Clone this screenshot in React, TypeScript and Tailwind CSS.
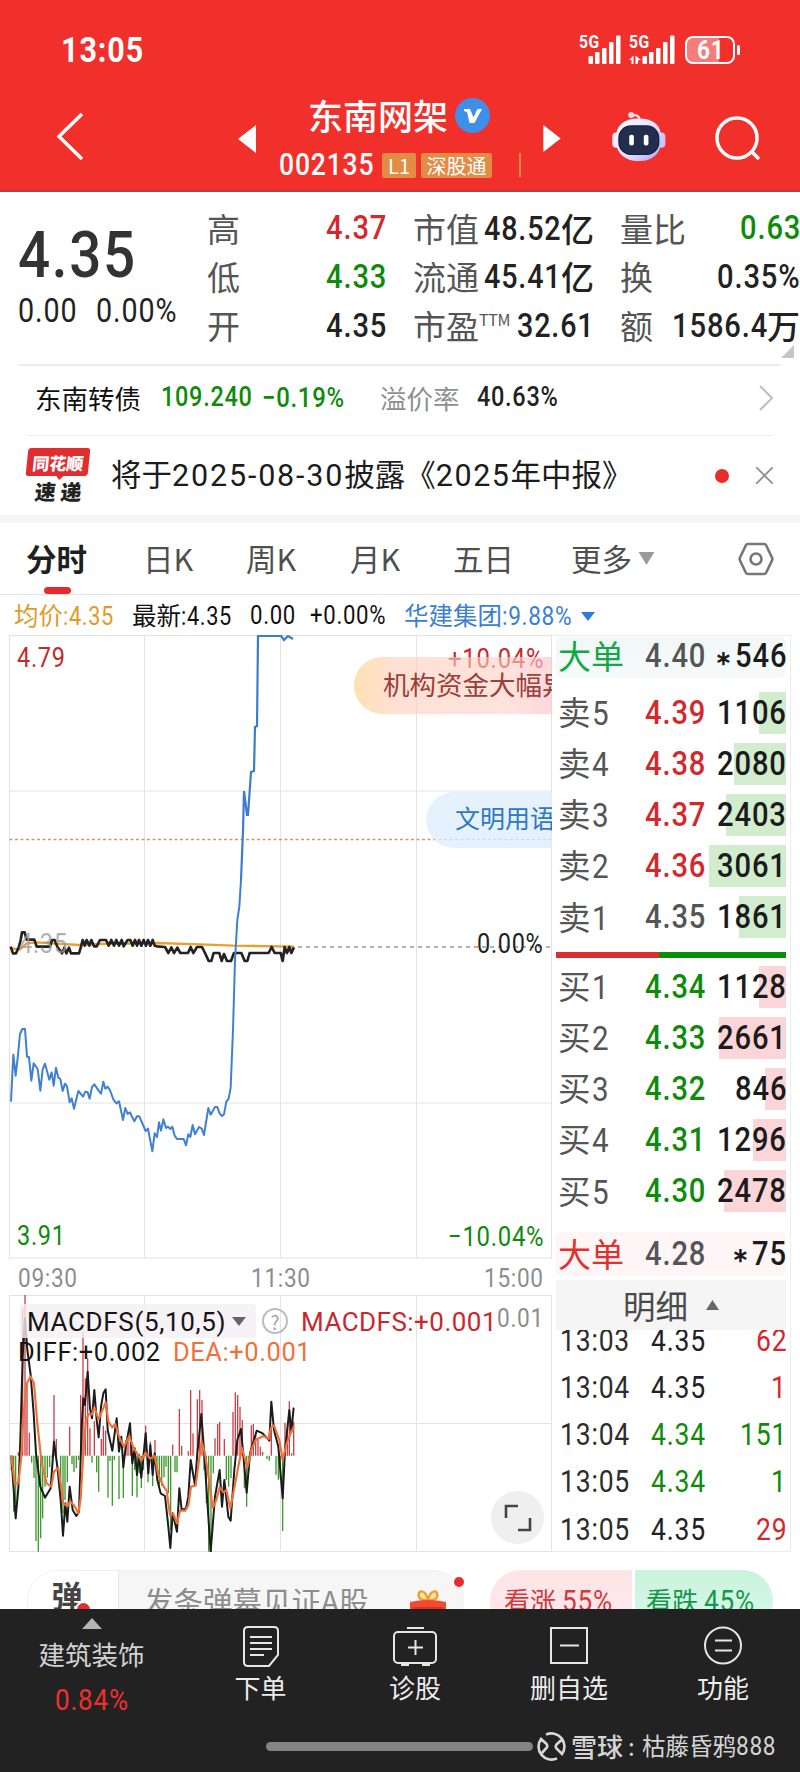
import React from "react";

type Tone = "red" | "green" | "ink" | "gray";

const TONES: Record<Tone, string> = {
  red: "text-[#d2292d]",
  green: "text-[#0f8a0b]",
  ink: "text-[#222222]",
  gray: "text-[#555555]",
};

const NARROWING = 0.13;
const TRACKING = 0.03;
const ADVANCES: Record<string, number> = { ".": 0.27, ":": 0.25, "%": 0.735, "-": 0.29 };

/** Condensed tabular figures; the negative margin gives back the width that the scaling frees. */
function Num({ children, className = "" }: { children: string; className?: string }) {
  const width = [...children].reduce((sum, c) => sum + (ADVANCES[c] ?? 0.565) + TRACKING, 0);
  return (
    <span className={"font-[Roboto,'Noto_Sans_CJK_SC',sans-serif] tracking-[0.03em] whitespace-nowrap " + className}>
      <span className="inline-block origin-left scale-x-[0.87]" style={{ marginRight: `${-(width * NARROWING + TRACKING).toFixed(3)}em` }}>
        {children}
      </span>
    </span>
  );
}

function Signal({ arrows = false }: { arrows?: boolean }) {
  return (
    <div className="relative h-[30px] w-[46px]">
      <Num className="absolute -top-[1px] left-0 text-[18px] leading-[16px] font-bold">5G</Num>
      <svg className="block h-[30px] w-[46px]" viewBox="0 0 46 30" fill="#fff">
        <g transform={arrows ? "translate(4 0)" : undefined}>
          <rect x="9.500" y="21" width="4.500" height="8" rx="1" />
          <rect x="16" y="17" width="4.500" height="12" rx="1" />
          <rect x="23" y="13" width="4.500" height="16" rx="1" />
          <rect x="30" y="7" width="4.500" height="22" rx="1" />
          <rect x="37" y="0.500" width="4.500" height="28.500" rx="1" />
        </g>
        {arrows && <path d="M0 25l4.500-4.500v8.500h-2v-4zM6.500 20.500l5.500 4.500h-2.500l-1 4h-2z" />}
      </svg>
    </div>
  );
}

function Robot() {
  return (
    <svg className="h-[53px] w-[57px]" viewBox="210 270 170 160">
      <defs>
        <linearGradient id="shell" x1="0" y1="0" x2="1" y2="1">
          <stop offset="0" stopColor="#ffffff" />
          <stop offset="0.6" stopColor="#e3dcfb" />
          <stop offset="1" stopColor="#a9a0f0" />
        </linearGradient>
      </defs>
      <path d="M274 286q26-4 24 18" fill="none" stroke="#fbdfe8" strokeWidth="7" />
      <circle cx="273" cy="285" r="9" fill="#ffd9df" />
      <rect x="216" y="338" width="24" height="46" rx="12" fill="#f5effd" />
      <rect x="352" y="338" width="24" height="46" rx="12" fill="#cfc4f8" />
      <path d="M296 296c46 0 68 22 68 60 0 42-22 68-68 68s-70-26-70-68c0-38 24-60 70-60z" fill="url(#shell)" />
      <rect x="236" y="318" width="120" height="86" rx="36" fill="#232d4d" stroke="#162044" strokeWidth="4" />
      <rect x="267" y="345" width="14" height="32" rx="6" fill="#fff" />
      <rect x="311" y="345" width="14" height="32" rx="6" fill="#fff" />
    </svg>
  );
}

function Header() {
  return (
    <header className="flex h-[192px] flex-col border-b-2 border-[#c2393a] bg-[#f1302c] text-white">
      <div className="flex h-[100px] items-center pr-[60px] pl-[61px]">
        <Num className="mt-[2px] flex-1 text-[35px] font-bold">13:05</Num>
        <div className="flex items-center">
          <Signal />
          <div className="w-[4px]" />
          <Signal arrows />
          <div className="ml-[10px] flex h-[28px] w-[50px] items-center justify-center rounded-[8px] border-2 border-white bg-[linear-gradient(90deg,#f67b7b_70%,#f1302c_70%)]">
            <Num className="text-[26px] leading-none font-bold">61</Num>
          </div>
          <div className="ml-[2px] h-[10px] w-[3px] rounded bg-white" />
        </div>
      </div>
      <div className="flex h-[90px] items-start">
        <svg className="mt-[12px] ml-[55px] h-[50px] w-[30px]" viewBox="0 0 30 50" fill="none" stroke="#fff" strokeWidth="3.500">
          <path d="M27 2L4 24.500L27 47" />
        </svg>
        <svg className="mt-[25px] ml-[153px] h-[28px] w-[18px]" viewBox="0 0 18 28" fill="#fff"><path d="M18 0v28L0 14z" /></svg>
        <div className="ml-[23px] flex w-[243px] flex-col">
          <div className="-mt-[6px] flex h-[42px] items-center pl-[29px]">
            <span className="w-[144px] text-[35px] font-medium whitespace-nowrap">东南网架</span>
            <svg className="mt-[1px] ml-[3px] size-[35px]" viewBox="0 0 35 35">
              <circle cx="17.500" cy="17.500" r="17.500" fill="#3f8ee8" />
              <path d="M9 11h6l3.500 8.500L22.500 11H27l-7.500 14h-5L12 14l-3-1z" fill="#fff" />
            </svg>
          </div>
          <div className="mt-[14px] flex h-[30px] items-center">
            <Num className="w-[103px] text-[30.500px] font-medium">002135</Num>
            <span className="flex h-[25px] w-[34px] items-center justify-center rounded-[2px] bg-[#e38c45] text-[20px]">L1</span>
            <span className="ml-[5px] flex h-[25px] w-[71px] items-center justify-center rounded-[2px] bg-[#e38c45] text-[20px]">深股通</span>
            <span className="ml-[27px] h-[24px] w-[2px] bg-[#e38c45]" />
          </div>
        </div>
        <svg className="mt-[25px] ml-[21px] h-[27px] w-[18px]" viewBox="0 0 18 28" fill="#fff"><path d="M0 0v28L18 14z" /></svg>
        <div className="mt-[10px] ml-[49px]"><Robot /></div>
        <svg className="mt-[15px] ml-[47px] h-[48px] w-[48px]" viewBox="0 0 48 48" fill="none" stroke="#fff" strokeWidth="3.500">
          <circle cx="23" cy="23" r="20" />
          <path d="M37 36l8 8" />
        </svg>
      </div>
    </header>
  );
}

const STATS: { a: [string, string, Tone]; b: [string, string, string, string]; c: [string, string, string, Tone] }[] = [
  { a: ["高", "4.37", "red"], b: ["市值", "", "48.52", "亿"], c: ["量比", "0.63", "", "green"] },
  { a: ["低", "4.33", "green"], b: ["流通", "", "45.41", "亿"], c: ["换", "0.35%", "", "ink"] },
  { a: ["开", "4.35", "ink"], b: ["市盈", "TTM", "32.61", ""], c: ["额", "1586.4", "万", "ink"] },
];

function Quote() {
  return (
    <section className="ml-[18px] flex h-[172px] pt-[12px]">
      <div className="flex w-[189px] flex-col">
        <Num className="mt-[17px] h-[68px] text-[65px] leading-[68px] font-medium text-[#333]">4.35</Num>
        <div className="mt-[2px] flex h-[40px] items-center text-[33px] text-[#222]">
          <Num className="w-[78px]">0.00</Num>
          <Num>0.00%</Num>
        </div>
      </div>
      <div className="flex w-[593px] flex-col">
        {STATS.map(({ a, b, c }) => (
          <div key={a[0]} className="flex h-[48.700px] shrink-0 items-center text-[33px] whitespace-nowrap text-[#555]">
            <span className="w-[80px]">{a[0]}</span>
            <Num className={"w-[99px] text-right text-[33.500px] font-medium " + TONES[a[2]]}>{a[1]}</Num>
            <span className="ml-[27px] flex w-[181px] items-center">
              <span>{b[0]}</span>
              {b[1] && <span className="-mt-[14px] text-[16px] tracking-[-0.020em]">{b[1]}</span>}
              <span className="ml-auto flex items-center text-[#222]">
                <Num className="font-medium">{b[2]}</Num>
                <span className="font-medium">{b[3]}</span>
              </span>
            </span>
            <span className="ml-[26px] flex w-[180px] items-center">
              <span>{c[0]}</span>
              <span className={"ml-auto flex items-center " + TONES[c[3]]}>
                <Num className="text-[33.500px] font-medium">{c[1]}</Num>
                <span className="font-medium">{c[2]}</span>
              </span>
            </span>
          </div>
        ))}
        <svg className="-mt-[5px] mr-[6px] ml-auto h-[13px] w-[13px] shrink-0" viewBox="0 0 13 13"><path d="M13 0v13H0z" fill="#c6c6c6" /></svg>
      </div>
    </section>
  );
}

function Bond() {
  return (
    <section className="mr-[20px] ml-[18px] flex h-[71px] items-center border-t-2 border-[#ececec] pb-[5px] pl-[17px] text-[26.500px]">
      <span className="w-[126px] text-[#111]">东南转债</span>
      <Num className="w-[101px] text-[27px] font-medium text-[#0f8a0b]">109.240</Num>
      <Num className="w-[118px] text-[27.500px] font-medium text-[#0f8a0b]">−0.19%</Num>
      <span className="w-[97px] text-[#8f8f8f]">溢价率</span>
      <Num className="flex-1 text-[27px] font-medium text-[#222]">40.63%</Num>
      <svg className="mr-[6px] h-[26px] w-[16px]" viewBox="0 0 16 26" fill="none" stroke="#bdbdbd" strokeWidth="2"><path d="M2 1l12 12L2 25" /></svg>
    </section>
  );
}

function News() {
  return (
    <section className="border-b-8 border-[#f5f5f5]">
      <div className="mr-[27px] ml-[27px] flex h-[80px] items-center border-t border-[#f0f0f0]">
        <div className="flex w-[84px] flex-col">
          <div className="relative flex h-[28px] w-[62px] -skew-x-6 items-center justify-center rounded-[3px] bg-[#e12d30] text-[17px] leading-none font-black text-white">
            同花顺
            <svg className="absolute -bottom-[4px] left-[30px] h-[5px] w-[9px]" viewBox="0 0 9 5"><path d="M0 0h9L4 5z" fill="#e12d30" /></svg>
          </div>
          <span className="mt-[3px] ml-[8px] -skew-x-6 text-[21px] leading-[24px] font-black whitespace-nowrap text-[#222]">速 递</span>
        </div>
        <span className="flex-1 pb-[2px] text-[30.500px] whitespace-nowrap text-[#1c1c1c]">
          将于<span className="font-[Roboto] tracking-[0.060em]">2025-08-30</span>披露《<span className="font-[Roboto] tracking-[0.050em]">2025</span>年中报》
        </span>
        <span className="mr-[27px] size-[14px] rounded-full bg-[#ea2c2b]" />
        <svg className="size-[17px]" viewBox="0 0 17 17" stroke="#8e8e8e" strokeWidth="1.800"><path d="M0 0l17 17M17 0L0 17" /></svg>
      </div>
    </section>
  );
}

function Tabs() {
  return (
    <nav className="flex h-[72px] items-center border-b border-[#e4e4e4] pl-[26px] text-[30.500px] text-[#4f4f4f]">
      <div className="relative flex h-full w-[117px] items-center">
        <span className="font-bold text-[#1f1f1f]">分时</span>
        <span className="absolute bottom-0 left-[18px] h-[7px] w-[27px] rounded-full bg-[#e62b2d]" />
      </div>
      <span className="w-[103px]">日K</span>
      <span className="w-[104px]">周K</span>
      <span className="w-[103px]">月K</span>
      <span className="w-[118px]">五日</span>
      <span>更多</span>
      <svg className="ml-[6px] h-[13px] w-[17px]" viewBox="0 0 17 14"><path d="M0 0h17L8.500 14z" fill="#9b9b9b" /></svg>
      <svg className="mr-[26px] ml-auto h-[36px] w-[36px]" viewBox="0 0 36 36" fill="none" stroke="#777" strokeWidth="2.600" strokeLinejoin="round">
        <path d="M10 3h16q1.500 0 2 1l6 12.500q.7 1.500 0 3L28 32q-.5 1-2 1H10q-1.500 0-2-1L2 19.500q-.7-1.500 0-3L8 4q.5-1 2-1z" />
        <circle cx="18" cy="18" r="5.500" />
      </svg>
    </nav>
  );
}

function Legend() {
  return (
    <div className="flex h-[40px] items-center pt-[2px] pl-[14px] text-[24.500px]">
      <span className="w-[118px] whitespace-nowrap text-[#e09b26]">均价<Num className="text-[25px]">:4.35</Num></span>
      <span className="w-[118px] whitespace-nowrap text-[#111]">最新<Num className="text-[25px]">:4.35</Num></span>
      <Num className="w-[60px] text-[25.500px] text-[#111]">0.00</Num>
      <Num className="w-[94px] text-[25.500px] text-[#111]">+0.00%</Num>
      <span className="w-[177px] whitespace-nowrap text-[#3c80d0]">华建集团<Num className="text-[26px]">:9.88%</Num></span>
      <svg className="h-[9px] w-[14px]" viewBox="0 0 14 9"><path d="M0 0h14L7 9z" fill="#2f7be0" /></svg>
    </div>
  );
}

function PriceChart() {
  return (
    <div className="relative h-[624px] w-[552px] overflow-hidden">
      <svg className="block h-full w-full" viewBox="0 0 552 624" fill="none">
        <path d="M9.500 .5H552M9.500 156H552M9.500 468H552M9.500 623H552M9.500 0V624M144.500 0V624M280.500 0V624M416.500 0V624M551.500 0V624" stroke="#e3e3e3" />
        <path d="M9.500 204.500H552" stroke="#c79a76" strokeWidth="1.500" strokeDasharray="3 2.500" />
        <path d="M290 312H552" stroke="#999" strokeWidth="1.500" strokeDasharray="4 4" />
        <g transform="translate(0 245) scale(.33333)" strokeLinejoin="round">
          <path d="M32 205L60 208L80 190L110 187L150 190L240 195L300 192L470 189L600 193L700 197L882 200" stroke="#e9a02c" strokeWidth="7" />
          <path d="M32 200L39 220L48 220L57 200L62 180L66 157L74 157L80 179L103 179L110 200L150 200L156 180L164 180L172 200L186 220L193 203L199 220L207 203L213 220L237 220L243 200L248 180L254 197L260 180L268 197L274 180L282 199L290 199L300 180L318 180L326 197L334 180L342 197L349 180L357 197L365 180L371 199L383 180L391 180L398 197L405 180L411 197L417 180L424 197L431 180L438 197L444 180L451 197L458 180L464 197L470 199L495 201L505 219L514 202L522 219L532 203L541 219L564 219L572 201L580 219L591 201L606 201L615 219L626 243L634 243L641 219L658 219L665 243L672 222L681 243L693 243L702 219L724 219L734 243L742 243L749 219L806 219L815 201L824 219L842 219L848 243L854 201L861 219L868 201L874 219L882 202" stroke="#232323" strokeWidth="8" />
          <path d="M33 665L40 524L47 587L54 525L60 462L67 447L75 447L81 530L87 531L94 602L101 550L113 567L121 632L128 568L135 551L148 599L155 577L161 617L168 563L175 593L181 597L188 633L195 611L201 619L209 667L215 655L222 686L235 633L249 650L256 635L263 637L269 656L276 621L283 613L296 632L303 641L310 605L316 626L323 620L330 631L341 660L349 670L357 664L369 720L376 684L383 702L390 697L403 724L411 709L418 709L437 753L444 746L457 814L464 760L471 771L477 727L483 752L490 718L498 744L504 740L511 747L517 740L524 767L531 777L551 777L558 796L565 763L571 771L578 735L585 763L597 741L605 746L612 765L625 684L632 704L645 681L652 681L659 701L666 708L672 703L679 665L686 656L692 623L699 450L705 240L712 120L718 80L723 0" stroke="#3f80d0" strokeWidth="6" />
        </g>
        <path d="M241 245L243 196L244 156L247 180L248 180L251 137L254 136L255 92L257 91L258 .8H281L284 5L288 1L293 4" stroke="#3b7dcc" strokeWidth="2.200" />
      </svg>
      <Num className="absolute top-[7px] left-[17px] text-[27px] text-[#c9272b]">4.79</Num>
      <Num className="absolute top-[7px] right-[9px] text-[27.500px] text-[#c9272b]">+10.04%</Num>
      <Num className="absolute top-[293px] left-[19px] text-[27px] text-[#9b9b9b]/80">4.35</Num>
      <Num className="absolute top-[293px] right-[9px] text-[27px] text-[#222]">0.00%</Num>
      <Num className="absolute bottom-[5px] left-[17px] text-[27px] text-[#0f8a0b]">3.91</Num>
      <Num className="absolute right-[9px] bottom-[5px] text-[27.500px] text-[#0f8a0b]">−10.04%</Num>
      <div className="absolute top-[22px] left-[354px] flex h-[57px] w-[300px] items-center rounded-full bg-[linear-gradient(90deg,rgba(254,222,170,.9),rgba(254,208,190,.65)_14%,rgba(254,208,196,.6)_50%,rgba(252,195,205,.65)_65%)] pb-[3px] pl-[29px] text-[26.500px] whitespace-nowrap text-[#9a4038]">
        机构资金大幅异动
      </div>
      <div className="absolute top-[157px] left-[426px] flex h-[56px] w-[300px] items-center rounded-full bg-[#dcedfd]/75 pb-[4px] pl-[29px] text-[25px] whitespace-nowrap text-[#2f78c4]">
        文明用语
      </div>
    </div>
  );
}

const RISES: [number, number][] = [
  [55, 637], [68, 205], [75, 165], [81, 430], [88, 578], [162, 465], [169, 597], [209, 560], [242, 465], [249, 275], [256, 415],
  [263, 355], [270, 565], [283, 543], [304, 597], [310, 557], [317, 572], [378, 600], [384, 580], [391, 565], [437, 557], [451, 605],
  [465, 600], [518, 614], [538, 507], [545, 618], [565, 634], [572, 450], [579, 580], [592, 478], [599, 450], [606, 480], [645, 595],
  [653, 552], [659, 546], [673, 597], [699, 516], [706, 457], [713, 465], [720, 500], [727, 540], [754, 556], [760, 552], [767, 580],
  [774, 600], [781, 620], [788, 636], [814, 560], [855, 548], [862, 570], [868, 484], [875, 640], [881, 545],
];

const FALLS: [number, number][] = [
  [34, 690], [41, 815], [47, 790], [95, 668], [102, 714], [108, 903], [115, 935], [122, 895], [128, 835], [135, 740], [142, 713],
  [149, 682], [155, 650], [182, 790], [189, 820], [195, 780], [202, 727], [216, 673], [222, 696], [229, 684], [236, 660], [276, 668],
  [290, 697], [296, 755], [324, 773], [330, 663], [337, 797], [343, 660], [357, 777], [370, 774], [397, 768], [404, 690], [411, 772],
  [418, 700], [424, 745], [430, 690], [444, 727], [458, 738], [471, 690], [478, 740], [485, 738], [492, 712], [498, 680], [505, 760],
  [512, 870], [525, 696], [531, 697], [612, 690], [619, 790], [626, 935], [633, 935], [640, 700], [679, 720], [686, 740], [693, 715],
  [733, 745], [740, 800], [747, 690], [801, 657], [808, 662], [828, 704], [835, 719], [841, 716], [848, 873],
];

function MacdChart() {
  return (
    <div className="relative h-[257px] w-[552px]">
      <svg className="block h-full w-full" viewBox="0 0 552 257" fill="none">
        <path d="M9.500 .5H552M9.500 128.500H552M9.500 256.500H552M9.500 0V257M144.500 0V257M280.500 0V257M416.500 0V257M551.500 0V257" stroke="#e3e3e3" />
        <g transform="translate(0 -55) scale(.33333)">
          {RISES.map(([x, y]) => <path key={x} d={`M${x} 647V${y}`} stroke="#cc4048" strokeWidth="4" />)}
          {FALLS.map(([x, y]) => <path key={x} d={`M${x} 647V${y}`} stroke="#3d9a2c" strokeWidth="4" />)}
          <g strokeLinejoin="round">
            <path d="M34 647L47 835L55 745L61 600L68 350L75 235L82 330L92 405L101 520L108 640L121 740L135 773L152 745L162 605L172 680L182 780L189 887L196 790L202 845L209 740L218 810L229 828L237 815L245 560L250 475L255 495L263 395L270 505L276 535L283 450L290 540L296 592L303 500L310 460L317 448L323 570L337 632L350 535L357 635L364 590L370 682L377 620L390 550L397 670L404 625L411 705L417 645L424 713L437 580L445 700L451 615L458 705L464 640L472 720L482 760L495 768L504 850L511 924L518 820L531 875L538 745L545 810L558 805L565 770L572 660L585 735L592 640L604 522L612 630L625 830L632 935L645 770L659 690L666 800L673 720L685 830L692 842L703 690L712 600L723 567L740 758L750 640L770 572L788 580L808 602L814 485L822 570L835 620L848 775L855 630L868 510L874 575L881 503" stroke="#1c1c1c" strokeWidth="6" />
            <path d="M34 647L44 730L55 730L64 650L70 530L80 430L92 410L102 430L112 550L125 670L140 730L154 740L162 695L175 684L183 740L190 790L203 798L210 784L223 797L235 820L242 775L250 640L258 540L266 522L275 524L283 502L296 538L317 487L325 545L337 562L346 552L357 590L372 620L388 588L400 622L411 640L424 662L437 638L450 656L464 648L475 705L490 738L500 752L510 825L520 822L531 850L540 812L556 812L565 796L573 740L587 737L597 660L605 606L615 640L627 720L638 803L647 785L659 743L670 757L679 750L691 805L700 760L715 680L726 624L742 683L754 630L767 600L790 588L806 597L813 562L822 556L838 600L848 660L860 610L872 580L882 560" stroke="#f0703a" strokeWidth="6.500" />
          </g>
        </g>
      </svg>
      <div className="absolute top-[9px] left-[20px] flex h-[34px] items-center">
        <div className="flex h-full w-[236px] items-center rounded-[3px] bg-[#f4eff2]/80 pl-[7px]">
          <span className="w-[205px] pt-[3px] font-[Roboto] text-[26px] tracking-[0.025em] whitespace-nowrap text-[#151515]">MACDFS(5,10,5)</span>
          <svg className="h-[9px] w-[14px]" viewBox="0 0 14 9"><path d="M0 0h14L7 9z" fill="#666" /></svg>
        </div>
        <span className="ml-[6px] flex size-[26px] items-center justify-center rounded-full border-2 border-[#bcbcbc] text-[19px] leading-none text-[#a5a5a5]">?</span>
        <span className="ml-[13px] w-[196px] pt-[3px] font-[Roboto] text-[26px] tracking-[0.018em] whitespace-nowrap text-[#c9272b]">MACDFS:+0.001</span>
        <Num className="-mt-[5px] text-[26px] text-[#8d8d8d]">0.01</Num>
      </div>
      <div className="absolute top-[42px] left-[18px] flex h-[32px] items-center font-[Roboto] text-[25.500px] tracking-[0.022em] whitespace-nowrap">
        <span className="w-[155px] text-[#151515]">DIFF:+0.002</span>
        <span className="text-[#ef7039]">DEA:+0.001</span>
      </div>
      <div className="absolute top-[196px] left-[491px] flex size-[53px] items-center justify-center rounded-full bg-[#efefef]">
        <svg className="size-[28px]" viewBox="0 0 28 28" fill="none" stroke="#444" strokeWidth="2.600"><path d="M2 14V2h12M26 14v12H14" /></svg>
      </div>
    </div>
  );
}

interface Level { label: string; price: string; volume: string; bar: number; tone: Tone }

const ASKS: Level[] = [
  { label: "卖5", price: "4.39", volume: "1106", bar: 27, tone: "red" },
  { label: "卖4", price: "4.38", volume: "2080", bar: 52, tone: "red" },
  { label: "卖3", price: "4.37", volume: "2403", bar: 60, tone: "red" },
  { label: "卖2", price: "4.36", volume: "3061", bar: 77, tone: "red" },
  { label: "卖1", price: "4.35", volume: "1861", bar: 47, tone: "gray" },
];

const BIDS: Level[] = [
  { label: "买1", price: "4.34", volume: "1128", bar: 27, tone: "green" },
  { label: "买2", price: "4.33", volume: "2661", bar: 67, tone: "green" },
  { label: "买3", price: "4.32", volume: "846", bar: 21, tone: "green" },
  { label: "买4", price: "4.31", volume: "1296", bar: 33, tone: "green" },
  { label: "买5", price: "4.30", volume: "2478", bar: 62, tone: "green" },
];

const TICKS: [string, string, Tone, string, Tone][] = [
  ["13:03", "4.35", "ink", "62", "red"],
  ["13:04", "4.35", "ink", "1", "red"],
  ["13:04", "4.34", "green", "151", "green"],
  ["13:05", "4.34", "green", "1", "green"],
  ["13:05", "4.35", "ink", "29", "red"],
];

function LevelRow({ level, barClass }: { level: Level; barClass: string }) {
  return (
    <div className="flex h-[51.200px] items-center text-[33.500px]">
      <span className="w-[89px] pl-[2px] text-[32.500px] text-[#555]">{level.label[0]}<Num className="ml-[1px] text-[34px]">{level.label[1]}</Num></span>
      <Num className={"font-medium " + TONES[level.tone]}>{level.price}</Num>
      <span className="relative ml-auto flex h-[42px] items-center">
        <span className={"absolute top-0 right-0 h-full " + barClass} style={{ width: level.bar }} />
        <Num className="relative font-medium text-[#1b1b1b]">{level.volume}</Num>
      </span>
    </div>
  );
}

function BigOrder({ className, labelClass, price, volume }: { className: string; labelClass: string; price: string; volume: string }) {
  return (
    <div className={"flex items-center rounded-[6px] text-[33.500px] " + className}>
      <span className={"w-[89px] pl-[2px] text-[33px] " + labelClass}>大单</span>
      <Num className="font-medium text-[#555]">{price}</Num>
      <span className="mt-[3px] mr-[3px] ml-auto font-[Roboto] text-[20px] leading-none font-bold text-[#1b1b1b]">∗</span>
      <Num className="font-medium text-[#1b1b1b]">{volume}</Num>
    </div>
  );
}

function OrderBook() {
  return (
    <aside className="flex h-[917px] w-[239px] flex-col overflow-hidden border-t border-r border-b border-[#ececec] pr-[4px] pl-[4px]">
      <BigOrder className="mt-[1px] h-[41px] bg-[linear-gradient(180deg,#f1f7f7,#f6fafa)] pb-[3px]" labelClass="text-[#12a846]" price="4.40" volume="546" />
      <div className="mt-[9px] flex flex-col">{ASKS.map((l) => <LevelRow key={l.label} level={l} barClass="bg-[#d2ecce]" />)}</div>
      <div className="mt-[9px] flex h-[6px] shrink-0"><div className="w-[103px] bg-[#dc2f33]" /><div className="flex-1 bg-[#0a8f08]" /></div>
      <div className="mt-[3px] flex flex-col">{BIDS.map((l) => <LevelRow key={l.label} level={l} barClass="bg-[#fbd5d7]" />)}</div>
      <BigOrder className="mt-[15px] h-[45px] bg-[#fef5f7]" labelClass="text-[#e0302f]" price="4.28" volume="75" />
      <div className="mt-[4px] flex h-[50px] shrink-0 items-center justify-center gap-[18px] bg-[#f5f5f5] text-[32.500px] text-[#4a4a4a]">
        明细
        <svg className="h-[10px] w-[13px]" viewBox="0 0 13 10"><path d="M6.500 0L13 10H0z" fill="#666" /></svg>
      </div>
      <div className="flex h-[221px] shrink-0 flex-col overflow-hidden">
        <div className="-mt-[13px] flex flex-col">
          {TICKS.map((t, i) => (
            <div key={i} className="flex h-[47.300px] shrink-0 items-center pl-[4px] text-[30.500px]">
              <Num className="w-[91px] text-[#2d2d2d]">{t[0]}</Num>
              <Num className={TONES[t[2]]}>{t[1]}</Num>
              <Num className={"ml-auto " + TONES[t[4]]}>{t[3]}</Num>
            </div>
          ))}
        </div>
      </div>
    </aside>
  );
}

function Barrage() {
  return (
    <section className="flex h-[57px] items-start overflow-hidden pt-[18px] pl-[27px]">
      <div className="relative flex h-[62px] w-[437px] shrink-0 rounded-[31px] border border-[#f0f0f0] bg-[#f6f6f6]">
        <div className="relative flex w-[91px] items-center justify-center rounded-l-[31px] border-r border-[#e8e8e8] bg-white text-[31px] leading-none font-bold text-[#444]">
          <span className="-mt-[13px] -ml-[12px]">弹</span>
          <span className="absolute top-[30px] left-[47px] size-[17px] rounded-full border-2 border-white bg-[#e32e2e]" />
        </div>
        <span className="flex-1 pl-[25px] text-[29.500px] leading-[58px] whitespace-nowrap text-[#8d8d8d]">发条弹幕见证A股</span>
        <svg className="mt-[18px] mr-[16px] h-[36px] w-[38px] shrink-0" viewBox="0 0 38 36">
          <path d="M19 11C16-1 8 1 10 8q2 4 9 3M19 11C22-1 30 1 28 8q-2 4-9 3" fill="#ffe3a3" stroke="#eca03a" strokeWidth="2.500" />
          <path d="M1 13q18-4 36 0v8q-18 4-36 0z" fill="#f24a30" />
          <path d="M4 18h30v18H4z" fill="#e02f24" />
        </svg>
        <span className="absolute top-[6px] -right-[1px] size-[10px] rounded-full bg-[#e62b2b]" />
      </div>
      <div className="ml-[26px] flex h-[62px] w-[283px] shrink-0 gap-[3px] overflow-hidden rounded-[31px] text-[26px] leading-[59px] whitespace-nowrap">
        <div className="w-[142px] bg-[linear-gradient(180deg,#fde4e7,#fde9ec)] pl-[14px] text-[#d33a3c]">看涨 <Num className="text-[30px]">55%</Num></div>
        <div className="flex-1 bg-[linear-gradient(180deg,#c8f3dd,#dbf9ea)] pl-[11px] text-[#16984a]">看跌 <Num className="text-[30px]">45%</Num></div>
      </div>
    </section>
  );
}

function NavItem({ label, className, children }: { label: string; className: string; children: React.ReactNode }) {
  return (
    <div className={"flex flex-col items-center pt-[15px] " + className}>
      <svg className="h-[44px] w-[44px]" viewBox="0 0 44 44" fill="none" stroke="#e6e6e6" strokeWidth="2">{children}</svg>
      <span className="-mt-[1px] text-[26px] leading-[40px] text-[#ededed]">{label}</span>
    </div>
  );
}

function BottomBar() {
  return (
    <footer className="flex h-[163px] flex-col bg-[#222222]">
      <div className="flex h-[120px]">
        <div className="flex w-[183px] flex-col items-center pt-[9px]">
          <svg className="h-[11px] w-[20px]" viewBox="0 0 20 11"><path d="M10 0l10 11H0z" fill="#b5b5b5" /></svg>
          <span className="mt-[5px] text-[26.500px] leading-[40px] text-[#d2d2d2]">建筑装饰</span>
          <Num className="mt-[7px] text-[30px] leading-[38px] text-[#ee302e]">0.84%</Num>
        </div>
        <NavItem label="下单" className="w-[155px]">
          <path d="M9 3h26q4 0 4 4v24l-9 11H9q-4 0-4-4V7q0-4 4-4zM11 13h22M11 19h22M11 25h22M11 31h14" />
        </NavItem>
        <NavItem label="诊股" className="w-[154px]">
          <rect x="1" y="8" width="42" height="31" rx="4" />
          <path d="M14 4h17M22.500 16v15M15 23.500h15M8 41h8M29 41h8" />
        </NavItem>
        <NavItem label="删自选" className="w-[154px]">
          <rect x="4" y="4" width="36" height="35" />
          <path d="M13 21.500h19" />
        </NavItem>
        <NavItem label="功能" className="w-[154px]">
          <circle cx="22" cy="21.500" r="18" />
          <path d="M14 16.500h17M14 26.500h17" />
        </NavItem>
      </div>
      <div className="flex h-[34px] items-center pl-[266px]">
        <div className="h-[9px] w-[267px] rounded-full bg-[#858585]" />
        <svg className="ml-[4px] size-[29px]" viewBox="0 0 29 29" fill="none" stroke="#d8d8d8" strokeWidth="2.600">
          <path d="M9 2.600A13 13 0 0 1 25 22L19.500 16.500q-1.500-2 0-4L25.500 7M20 26.400A13 13 0 0 1 4 7l5.500 5q1.500 2 0 4L4 22" />
        </svg>
        <span className="ml-[5px] flex items-center whitespace-nowrap text-[#d4d4d4]">
          <span className="w-[57px] text-[26px] font-medium">雪球</span>
          <span className="w-[14px] text-[24px]">:</span>
          <span className="text-[23.500px]">枯藤昏鸦<Num className="text-[26px]">888</Num></span>
        </span>
      </div>
    </footer>
  );
}

export default function App() {
  return (
    <main className="flex h-[1772px] w-[800px] flex-col overflow-hidden bg-white font-['Noto_Sans_CJK_SC',sans-serif] leading-tight">
      <Header />
      <Quote />
      <Bond />
      <News />
      <Tabs />
      <Legend />
      <div className="flex">
        <div className="flex w-[552px] flex-col">
          <PriceChart />
          <div className="flex h-[36px] items-center pt-[3px] pr-[9px] pl-[18px] text-[26px] text-[#8d8d8d]">
            <Num className="flex-1">09:30</Num>
            <Num className="flex-1 text-center">11:30</Num>
            <Num className="flex-1 text-right">15:00</Num>
          </div>
          <MacdChart />
        </div>
        <OrderBook />
      </div>
      <Barrage />
      <BottomBar />
    </main>
  );
}
